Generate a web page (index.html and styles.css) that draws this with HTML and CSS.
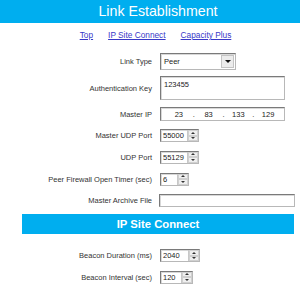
FILE: index.html
```html
<!DOCTYPE html>
<html lang="en">
<head>
    <meta charset="UTF-8">
    <title>Link Establishment</title>
    <link rel="stylesheet" href="styles.css">
</head>
<body>
    <div class="page">
        <div class="header">Link Establishment</div>

        <div class="nav">
            <a href="#">Top</a>
            <a href="#">IP Site Connect</a>
            <a href="#">Capacity Plus</a>
        </div>

        <!-- Campos de configuração -->
        <div class="row r-select">
            <span class="label">Link Type</span>
            <div class="select">
                <span class="select-text">Peer</span>
                <span class="select-btn"><span class="tri-down"></span></span>
            </div>
        </div>

        <div class="row r-auth">
            <span class="label">Authentication Key</span>
            <div class="textarea">123455</div>
        </div>

        <div class="row r-ip">
            <span class="label">Master IP</span>
            <div class="ip">
                <span class="oct">23</span><span class="dot">.</span>
                <span class="oct">83</span><span class="dot">.</span>
                <span class="oct">133</span><span class="dot">.</span>
                <span class="oct">129</span>
            </div>
        </div>

        <div class="row r-21">
            <span class="label">Master UDP Port</span>
            <div class="spin w38"><span class="val">55000</span><span class="arrows"><i class="up"></i><i class="down"></i></span></div>
        </div>

        <div class="row r-22">
            <span class="label">UDP Port</span>
            <div class="spin w38"><span class="val">55129</span><span class="arrows"><i class="up"></i><i class="down"></i></span></div>
        </div>

        <div class="row r-22">
            <span class="label">Peer Firewall Open Timer (sec)</span>
            <div class="spin w29"><span class="val">6</span><span class="arrows"><i class="up"></i><i class="down"></i></span></div>
        </div>

        <div class="row r-21">
            <span class="label">Master Archive File</span>
            <div class="file"></div>
        </div>

        <div class="section">IP Site Connect</div>

        <div class="row r-21 first">
            <span class="label">Beacon Duration (ms)</span>
            <div class="spin w40"><span class="val">2040</span><span class="arrows"><i class="up"></i><i class="down"></i></span></div>
        </div>

        <div class="row r-22">
            <span class="label">Beacon Interval (sec)</span>
            <div class="spin w33"><span class="val">120</span><span class="arrows"><i class="up"></i><i class="down"></i></span></div>
        </div>
    </div>
</body>
</html>
```

FILE: styles.css
```css
body {
    margin: 0;
    overflow: hidden;
    background: #fff;
    font-family: 'Liberation Sans', Arial, sans-serif;
    color: #333;
}
.page {
    width: 300px;
}
.header {
    background: #00aeef;
    color: #fff;
    height: 23px;
    line-height: 23px;
    text-align: center;
    font-size: 14.2px;
    padding-left: 16px;
}
.nav {
    height: 24px;
    display: flex;
    justify-content: center;
    align-items: center;
    gap: 15px;
    padding-left: 11px;
    font-size: 8.3px;
    margin-bottom: 3px;
}
.nav a {
    color: #3838c8;
}

/* Linhas do formulário */
.row {
    display: flex;
    align-items: center;
}
.label {
    width: 152px;
    text-align: right;
    font-size: 7.5px;
    margin-right: 8px;
    flex-shrink: 0;
}
.r-select { height: 23px; }
.r-auth { height: 30px; }
.r-ip { height: 22px; }
.r-21 { height: 21px; }
.r-22 { height: 22px; }
.first { margin-top: 11px; }

.select, .textarea, .ip, .spin, .file {
    box-sizing: border-box;
    border: 1px solid #b8b8b8;
    border-top-color: #7a7a7a;
    border-left-color: #7a7a7a;
    box-shadow: inset 1px 1px 0 #d8d8d8;
    background: #fff;
    font-size: 7.5px;
    color: #222;
}
.select {
    width: 76px;
    height: 17px;
    display: flex;
    align-items: center;
    padding: 1px;
}
.select-text {
    flex: 1;
    padding-left: 2px;
}
.select-btn {
    width: 13px;
    height: 13px;
    background: #ececec;
    border: 1px solid #c4c4c4;
    box-sizing: border-box;
    display: flex;
    align-items: center;
    justify-content: center;
}
.tri-down {
    border-left: 3px solid transparent;
    border-right: 3px solid transparent;
    border-top: 3px solid #111;
}
.textarea {
    width: 125px;
    height: 24px;
    padding: 3px 3px;
}
.ip {
    width: 125px;
    height: 14px;
    display: flex;
    align-items: center;
    padding: 0 4px 0 6px;
}
.oct {
    flex: 1;
    text-align: center;
}
.dot {
    width: 6px;
    text-align: center;
}
.spin {
    height: 13px;
    display: flex;
    align-items: center;
    padding-left: 2px;
}
.spin .val {
    flex: 1;
}
.arrows {
    width: 10px;
    height: 11px;
    display: flex;
    flex-direction: column;
    border-left: 1px solid #c8c8c8;
}
.arrows i {
    flex: 1;
    display: flex;
    align-items: center;
    justify-content: center;
    background: #efefef;
    border: 1px solid #d0d0d0;
}
.arrows i::after {
    content: "";
    border-left: 2px solid transparent;
    border-right: 2px solid transparent;
}
.arrows .up::after {
    border-bottom: 2px solid #333;
}
.arrows .down::after {
    border-top: 2px solid #333;
}
.w38 { width: 39px; }
.w29 { width: 29px; }
.w40 { width: 40px; }
.w33 { width: 33px; }
.file {
    width: 136px;
    height: 13px;
    margin-left: -1px;
}
.section {
    margin: 3px 6px 0 22px;
    height: 20px;
    line-height: 20px;
    background: #00aeef;
    color: #fff;
    font-weight: bold;
    font-size: 11.3px;
    text-align: center;
}
```
